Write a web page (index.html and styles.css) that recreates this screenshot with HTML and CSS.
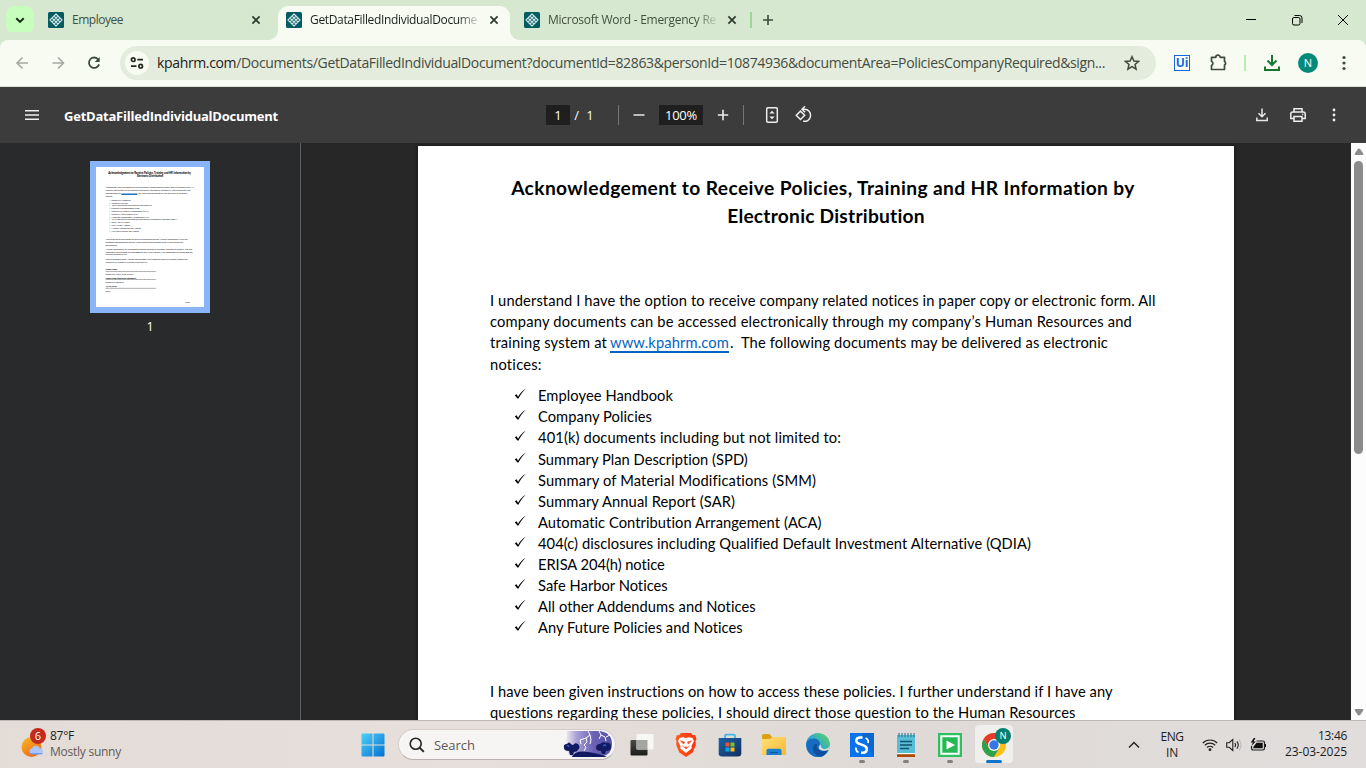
FILE: index.html
```html
<!DOCTYPE html>
<html lang="en">
<head>
<meta charset="utf-8">
<title>GetDataFilledIndividualDocument</title>
<link rel="stylesheet" href="styles.css">
</head>
<body>
<svg width="0" height="0" class="defs">
  <defs>
    <symbol id="kpa" viewBox="0 0 16 16"><rect width="16" height="16" rx="1.5" fill="#045c63"/><path d="M8 2 14 8 8 14 2 8Z M6 4l6 6M4 6l6 6M10 4l-6 6M12 6l-6 6" fill="none" stroke="#cfe6e6" stroke-width="1.1" stroke-linejoin="round"/></symbol>
    <symbol id="x" viewBox="0 0 12 12"><path d="M2.4 2.4l7.2 7.2M9.6 2.4l-7.2 7.2" stroke="currentColor" stroke-width="1.7"/></symbol>
    <symbol id="check" viewBox="0 0 12 12"><path d="M.8 7.200 2.500 6.300 4.100 8.700 C6 5.500 8.400 2.700 11.700 .8 C8.700 3.600 6.500 6.600 4.500 10.500 L3.400 10.500 Z" fill="#000"/></symbol>
    <linearGradient id="gw" x1="0" y1="0" x2="1" y2="1"><stop offset="0" stop-color="#4fd0fb"/><stop offset="1" stop-color="#0270cf"/></linearGradient>
    <linearGradient id="gsun" x1="0" y1="0" x2=".5" y2="1"><stop offset="0" stop-color="#f3bd2c"/><stop offset="1" stop-color="#f56b12"/></linearGradient>
    <linearGradient id="gedge" x1="0" y1="1" x2="1" y2="0"><stop offset="0" stop-color="#1664b5"/><stop offset=".45" stop-color="#2aa5dc"/><stop offset="1" stop-color="#62d851"/></linearGradient>
    <linearGradient id="gstore" x1="0" y1="0" x2="1" y2="1"><stop offset="0" stop-color="#1d62a8"/><stop offset="1" stop-color="#122f5d"/></linearGradient>
    <linearGradient id="gfold" x1="0" y1="0" x2="1" y2="1"><stop offset="0" stop-color="#ffe07a"/><stop offset="1" stop-color="#f5b92c"/></linearGradient>
    <linearGradient id="gbrave" x1="0" y1="0" x2="1" y2="0"><stop offset="0" stop-color="#ff5a22"/><stop offset="1" stop-color="#f7320d"/></linearGradient>
    <linearGradient id="gsky" x1="0" y1="0" x2="1" y2="0"><stop offset="0" stop-color="#f6f3f2"/><stop offset=".25" stop-color="#a9a0d6"/><stop offset=".6" stop-color="#6b62b6"/><stop offset="1" stop-color="#5751a5"/></linearGradient>
    <linearGradient id="gtv" x1="0" y1="0" x2="0" y2="1"><stop offset="0" stop-color="#4a4a48"/><stop offset="1" stop-color="#1d1d1c"/></linearGradient>
  </defs>
</svg>

<header class="tabstrip">
  <div class="tab-search"><svg width="12" height="12" viewBox="0 0 12 12"><path d="M2.300 4.200 6 7.900 9.700 4.200" fill="none" stroke="#1b2b18" stroke-width="2"/></svg></div>
  <div class="tab first"><svg class="fav"><use href="#kpa"/></svg><span class="title"><span data-w="51">Employee</span></span><svg class="close"><use href="#x"/></svg></div>
  <div class="tab active"><svg class="fav"><use href="#kpa"/></svg><span class="title fade"><span data-w="167">GetDataFilledIndividualDocume</span></span><svg class="close"><use href="#x"/></svg></div>
  <div class="tab last"><svg class="fav"><use href="#kpa"/></svg><span class="title fade"><span data-w="168">Microsoft Word - Emergency Re</span></span><svg class="close"><use href="#x"/></svg></div>
  <i class="tab-sep"></i>
  <svg class="newtab" width="12" height="12" viewBox="0 0 12 12"><path d="M6 1v10M1 6h10" stroke="#3c4a3a" stroke-width="1.600"/></svg>
  <div class="winbtns">
    <svg width="46" height="40" viewBox="0 0 46 40"><path d="M18 19.500h10" stroke="#000"/></svg>
    <svg width="46" height="40" viewBox="0 0 46 40"><g fill="none" stroke="#000"><rect x="18.500" y="17.500" width="7.500" height="7.500" rx="1.500"/><path d="M20.500 15.500h5a2.500 2.500 0 0 1 2.500 2.500v5"/></g></svg>
    <svg width="46" height="40" viewBox="0 0 46 40"><path d="M18 15l10 10M28 15 18 25" stroke="#000"/></svg>
  </div>
</header>

<nav class="toolbar">
  <svg class="ic" viewBox="0 0 36 36"><path d="M24 18H13M18.500 12.500 13 18l5.500 5.500" fill="none" stroke="#a5aaa1" stroke-width="1.600"/></svg>
  <svg class="ic" viewBox="0 0 36 36"><path d="M12.500 18h11M18 12.500l5.500 5.500-5.500 5.500" fill="none" stroke="#a5aaa1" stroke-width="1.600"/></svg>
  <svg class="ic" viewBox="0 0 36 36"><path d="M22.300 14.500A5.200 5.200 0 1 0 23.100 19.400" fill="none" stroke="#3d4b3b" stroke-width="1.800"/><path d="M23.700 12v5h-5z" fill="#3d4b3b"/></svg>
  <div class="omnibox">
    <span class="site"><svg width="16" height="16" viewBox="0 0 16 16"><g fill="none" stroke="#24291f" stroke-width="1.700"><circle cx="4.200" cy="4.700" r="1.800"/><path d="M8.300 4.700H14M2 11.200h5.500"/><circle cx="11.700" cy="11.200" r="1.800"/></g></svg></span>
    <span class="url" data-w="948"><b>kpahrm.com</b>/Documents/GetDataFilledIndividualDocument?documentId=82863&amp;personId=10874936&amp;documentArea=PoliciesCompanyRequired&amp;sign...</span>
    <svg class="star" width="16" height="16" viewBox="0 0 16 16"><path d="M8 1.700 9.900 6l4.700.4-3.600 3.100 1.100 4.600L8 11.700l-4.100 2.400L5 9.500 1.400 6.400 6.100 6Z" fill="none" stroke="#3f4a3d" stroke-width="1.500"/></svg>
  </div>
  <span class="ic ui"><span>Ui</span></span>
  <svg class="ic" viewBox="0 0 36 36"><path d="M11.500 12.300h4.300a2.200 2.200 0 0 1 4.400 0h4.300v4.200a2 2 0 0 1 0 3.600v4.400H11.500v-4a2.300 2.300 0 0 0 0-4.200Z" fill="none" stroke="#3c4b3a" stroke-width="1.700" stroke-linejoin="round"/></svg>
  <i class="bar-sep"></i>
  <svg class="ic" viewBox="0 0 36 36"><path d="M18 10v9.500M13.500 15.500 18 20l4.500-4.500M11 21.500V25h14v-3.500" fill="none" stroke="#17752d" stroke-width="2"/></svg>
  <span class="ic"><span class="avatar">N</span></span>
  <svg class="ic" viewBox="0 0 36 36" fill="#3c4b3a"><circle cx="18" cy="12.500" r="1.600"/><circle cx="18" cy="18" r="1.600"/><circle cx="18" cy="23.500" r="1.600"/></svg>
</nav>

<div class="pdfbar">
  <svg class="burger" width="14" height="10" viewBox="0 0 14 10"><path d="M0 .8h14M0 5h14M0 9.200h14" stroke="#efefef" stroke-width="1.500"/></svg>
  <strong class="doc-name"><span data-w="214">GetDataFilledIndividualDocument</span></strong>
  <div class="controls">
    <span class="box page-no">1</span><span class="slash">/</span><span class="total">1</span>
    <i></i>
    <svg class="minus" width="12" height="12" viewBox="0 0 12 12"><path d="M.5 6h11" stroke="#ddd" stroke-width="1.600"/></svg>
    <span class="box zoom"><span data-w="32">100%</span></span>
    <svg class="plus" width="12" height="12" viewBox="0 0 12 12"><path d="M.8 6h10.400M6 .8v10.400" stroke="#eee" stroke-width="1.600"/></svg>
    <i></i>
    <svg class="fit" width="14" height="18" viewBox="0 0 14 18"><rect x="1.700" y="1.700" width="10.600" height="14.600" rx="1.200" fill="none" stroke="#eee" stroke-width="1.500"/><path d="M4.300 7.500 7 4.800l2.700 2.700zM4.300 10.500 7 13.200l2.700-2.700z" fill="#eee"/></svg>
    <svg class="rotate" width="20" height="20" viewBox="0 0 20 20"><g fill="none" stroke="#eee" stroke-width="1.500"><path d="M2.300 10.300 6.500 6.100l4.200 4.200-4.200 4.200Z"/><path d="M8.200 4.300h2.300a6 6 0 1 1-1.400 11.800"/><path d="M11 1.300 8 4.300l3 3"/></g></svg>
  </div>
  <div class="actions">
    <svg class="ic" viewBox="0 0 36 36"><path d="M18 11.500v8M14.500 16.300l3.500 3.500 3.500-3.500M12.800 20.500v3h10.400v-3" fill="none" stroke="#e8e8e8" stroke-width="1.500"/></svg>
    <svg class="ic" viewBox="0 0 36 36"><g fill="none" stroke="#eee" stroke-width="1.500"><path d="M14 15v-3.200h8V15M14 21.500h-3.200V17a2 2 0 0 1 2-2h10.400a2 2 0 0 1 2 2v4.500H22"/><path d="M14 19.500h8v4.700h-8z"/></g><circle cx="22.700" cy="17.300" r=".8" fill="#eee"/></svg>
    <svg class="ic" viewBox="0 0 36 36" fill="#eee"><circle cx="18" cy="13" r="1.400"/><circle cx="18" cy="18" r="1.400"/><circle cx="18" cy="23" r="1.400"/></svg>
  </div>
</div>

<main class="viewer">
  <aside class="thumbs">
    <div class="thumb">
      <svg width="108" height="140" viewBox="0 0 816 1056" class="mini">
        <g class="mini-h"><text x="93" y="49" textLength="624" lengthAdjust="spacingAndGlyphs">Acknowledgement to Receive Policies, Training and HR Information by</text><text x="309" y="77" textLength="198" lengthAdjust="spacingAndGlyphs">Electronic Distribution</text></g>
        <text x="72" y="160" textLength="666">I understand I have the option to receive company related notices in paper copy or electronic form. All</text>
        <text x="72" y="181" textLength="642">company documents can be accessed electronically through my company’s Human Resources and</text>
        <text x="72" y="202" textLength="114">training system at</text><text x="192" y="202" fill="#0563c1" textLength="119">www.kpahrm.com</text><path d="M191 206h121" stroke="#0563c1" stroke-width="8"/><text x="312" y="202" textLength="377">. The following documents may be delivered as electronic</text>
        <text x="72" y="224">notices:</text>
        <text x="98" y="255">✓ Employee Handbook</text><text x="98" y="276">✓ Company Policies</text><text x="98" y="297" textLength="324">✓ 401(k) documents including but not limited to:</text><text x="98" y="319" textLength="232">✓ Summary Plan Description (SPD)</text><text x="98" y="340" textLength="300">✓ Summary of Material Modifications (SMM)</text><text x="98" y="361" textLength="219">✓ Summary Annual Report (SAR)</text><text x="98" y="382" textLength="306">✓ Automatic Contribution Arrangement (ACA)</text><text x="98" y="403" textLength="514">✓ 404(c) disclosures including Qualified Default Investment Alternative (QDIA)</text><text x="98" y="424">✓ ERISA 204(h) notice</text><text x="98" y="445">✓ Safe Harbor Notices</text><text x="98" y="466" textLength="240">✓ All other Addendums and Notices</text><text x="98" y="487" textLength="226">✓ Any Future Policies and Notices</text>
        <text x="72" y="551" textLength="622">I have been given instructions on how to access these policies. I further understand if I have any</text>
        <text x="72" y="572" textLength="586">questions regarding these policies, I should direct those question to the Human Resources</text>
        <text x="72" y="596">Department.</text>
        <text x="72" y="625" textLength="655">I accept responsibility for accessing the policies through an accessible computer at anytime, and also</text>
        <text x="72" y="647" textLength="658">understand that printing or transmitting is at my own expense. I am responsible for completing the</text>
        <text x="72" y="667">training assigned to me.</text>
        <text x="72" y="703" textLength="618">With my signature below, I hereby acknowledge I have chosen to receive all company notices and</text>
        <text x="72" y="721" textLength="320">complete all company training electronically.</text>
        <g class="mini-b"><text x="72" y="778">Name Name</text><text x="72" y="846" textLength="230">Name Name (Electronic Signature)</text><text x="76" y="904">3/23/2025</text></g>
        <path d="M72 789h382M72 849h382M72 916h382" stroke="#222" stroke-width="3" stroke-dasharray="9 1"/>
        <text x="72" y="816">Employee Name (Print Clearly)</text><text x="72" y="877">Employee Signature</text><text x="72" y="944">Date</text><text x="674" y="1028">2021</text>
      </svg>
    </div>
    <span class="thumb-no">1</span>
  </aside>
  <section class="canvas">
    <article class="page">
      <h1><span class="ln" data-w="624">Acknowledgement to Receive Policies, Training and HR Information by</span><span class="ln second" data-w="198">Electronic Distribution</span></h1>
      <p class="intro">
        <span class="ln" data-w="666">I understand I have the option to receive company related notices in paper copy or electronic form. All</span>
        <span class="ln" data-w="642">company documents can be accessed electronically through my company’s Human Resources and</span>
        <span class="row"><span data-w="117">training system at</span><a data-w="119">www.kpahrm.com</a><span data-w="378">.&nbsp; The following documents may be delivered as electronic</span></span>
        <span class="ln" data-w="52">notices:</span>
      </p>
      <ul>
        <li><svg><use href="#check"/></svg><span data-w="135">Employee Handbook</span></li>
        <li><svg><use href="#check"/></svg><span data-w="114">Company Policies</span></li>
        <li><svg><use href="#check"/></svg><span data-w="303">401(k) documents including but not limited to:</span></li>
        <li><svg><use href="#check"/></svg><span data-w="210">Summary Plan Description (SPD)</span></li>
        <li><svg><use href="#check"/></svg><span data-w="278">Summary of Material Modifications (SMM)</span></li>
        <li><svg><use href="#check"/></svg><span data-w="197">Summary Annual Report (SAR)</span></li>
        <li><svg><use href="#check"/></svg><span data-w="284">Automatic Contribution Arrangement (ACA)</span></li>
        <li><svg><use href="#check"/></svg><span data-w="493">404(c) disclosures including Qualified Default Investment Alternative (QDIA)</span></li>
        <li><svg><use href="#check"/></svg><span data-w="127">ERISA 204(h) notice</span></li>
        <li><svg><use href="#check"/></svg><span data-w="130">Safe Harbor Notices</span></li>
        <li><svg><use href="#check"/></svg><span data-w="218">All other Addendums and Notices</span></li>
        <li><svg><use href="#check"/></svg><span data-w="205">Any Future Policies and Notices</span></li>
      </ul>
      <p class="more">
        <span class="ln" data-w="623">I have been given instructions on how to access these policies. I further understand if I have any</span>
        <span class="ln" data-w="586">questions regarding these policies, I should direct those question to the Human Resources</span>
      </p>
    </article>
  </section>
  <div class="scroll"><svg width="10" height="7" viewBox="0 0 10 7"><path d="M4 .8h2L9.500 6 9 7H1L.5 6Z" fill="#8b8b8b"/></svg><span class="grip"></span><svg class="down" width="10" height="7" viewBox="0 0 10 7"><path d="M4 6.200h2L9.500 1 9 0H1L.5 1Z" fill="#8b8b8b"/></svg></div>
</main>

<footer class="taskbar">
  <div class="weather">
    <div class="sun"><svg width="24" height="24" viewBox="0 0 24 24"><circle cx="10.500" cy="11" r="10" fill="url(#gsun)"/><path d="M10.500 18a3 3 0 0 1 .4-5.800 4.500 4.500 0 0 1 8 0A3 3 0 0 1 20 18Z" fill="#a9c6fb"/><path d="M8.500 17h13.500q-1 1.500-2.500 1.500h-9Q9 18.500 8.500 17Z" fill="#6f9ff0"/></svg><span class="badge">6</span></div>
    <div class="wtext"><span data-w="24">87°F</span><span class="dim" data-w="71">Mostly sunny</span></div>
  </div>
  <svg class="start" width="24" height="24" viewBox="0 0 24 24" fill="url(#gw)"><path d="M.5 1.500q0-1 1-1h10v11H.5zM12.500.500h10q1 0 1 1v10h-11zM.5 12.500h11v11h-10q-1 0-1-1zM12.500 12.500h11v10q0 1-1 1h-10z"/></svg>
  <div class="search">
    <svg width="16" height="16" viewBox="0 0 16 16"><circle cx="6.700" cy="6.700" r="5.500" fill="none" stroke="#222" stroke-width="1.600"/><path d="m10.800 10.800 4 4" stroke="#222" stroke-width="1.900"/></svg>
    <span data-w="41">Search</span>
    <svg class="storm" width="50" height="27" viewBox="0 0 50 27"><path d="M4 0h33q12 2 12 13T38 26H9Q1 20 2 13Q4 8 4 0Z" fill="url(#gsky)"/><g fill="#101b61"><path d="M9 26Q12 19 25 21T44 26z"/><path d="M1 17q-1-4 3-4 2-3 4 0 1 1 2 1 2-3 5-1 3 3 0 6-1 2-4 2l-1 3H7l-1-4q-5 0-5-3zM33 17q0-4 4-4 3-3 6-1 5-1 5 4 0 4-5 4l-1 3h-3l-1-3q-5 0-5-3z"/></g><g fill="none" stroke="#fff" stroke-width="1"><path d="m25 0 2 4-4 3 1 4-3 3 2 2-2 4M27 4l1 5-1 4M23 7l-6 2 1 4M36 0l2 4-2 4M38 4l4 2 1 4M43 6l4-2"/></g><path d="M4 15q1-1 2 1M40 15q2-2 3 0" stroke="#3458bd" stroke-width="1.500" fill="none"/></svg>
  </div>
  <div class="apps">
    <span><svg width="24" height="24" viewBox="0 0 24 24"><rect x=".5" y="7" width="17" height="15.500" rx="1" fill="url(#gtv)"/><rect x="6.500" y="1" width="17" height="15.500" rx="1" fill="#f7f7f5"/><path d="M6.500 7h11v9.500h-11z" fill="#a5a5a2"/></svg></span>
    <span><svg width="24" height="24" viewBox="0 0 24 24"><path d="M7 0h10l2 2.300 2-.2L22.500 6l-1 2 .3 4-3.100 7.500L12 24l-6.700-4.500L2.200 12 2.500 8 1.500 6 3 2.100l2 .2Z" fill="url(#gbrave)"/><path d="m5.500 5 3.500-.8L12 5l3-.8 3.500.8 1.500 3-2.500 5 .2 2.500L14.500 18 12 20l-2.500-2-3.200-2.500.2-2.500L4 8Z" fill="#fff"/><path d="m6.500 8 4 1-.8 2zM17.500 8l-4 1 .8 2zM10.500 14h3L12 16zM8.500 12.500l1.500 2M15.500 12.500l-1.500 2" fill="#f8491c" stroke="#f8491c" stroke-width=".7"/></svg></span>
    <span><svg width="24" height="24" viewBox="0 0 24 24"><path d="M7 6V3q0-1.300 1.300-1.300h7.400Q17 1.700 17 3v3" fill="none" stroke="#43b6e8" stroke-width="1.800"/><path d="M.7 5h22.600v15.500Q23.300 23.500 20 23.500H4Q.7 23.500.7 20.500Z" fill="url(#gstore)"/><path fill="#f35325" d="M7.500 9.500h4v4h-4z"/><path fill="#81bc32" d="M12.500 9.500h4v4h-4z"/><path fill="#05a6f0" d="M7.500 14.500h4v4h-4z"/><path fill="#ffba08" d="M12.500 14.500h4v4h-4z"/></svg></span>
    <span><svg width="24" height="24" viewBox="0 0 24 24"><path d="M0 2.500Q0 1 1.500 1h6L10 4H24v5H0Z" fill="#dba20d"/><path d="M0 6h8l2.500-2H24v18H0Z" fill="url(#gfold)"/><path d="M4.500 22v-4.500q0-1.800 1.800-1.800h11.400q1.800 0 1.800 1.800V22Z" fill="#1d7fd0"/><path d="M8 19h8v1.200H8z" fill="#0c5aa3"/></svg></span>
    <span><svg width="24" height="24" viewBox="0 0 24 24"><circle cx="12" cy="12" r="12" fill="url(#gedge)"/><path d="M1 8.500C5 3.500 13 5 14 10c.500 2-2.500 3-1 5.500 2 3 7 2.500 9.500 0Q20 24 12 24C4 24-1 16 1 8.500Z" fill="#156cc0"/><path d="M9 11c-4 3-2 11 5 12.800Q20 23 22.500 16q-5 4-10 .5-3-2.500-1-5.500z" fill="#0d4f9e"/><path d="M14.500 11.500q.5 5 5 4.500 3.500-.6 4.400-4l-.8 4.800q-5 2-9.200-.1-2.500-2 .6-5.200Z" fill="#e2ddda"/></svg></span>
    <span class="run"><svg width="24" height="24" viewBox="0 0 24 24"><path fill="#0873ea" d="M0 0h24v24H0z"/><path d="M12 0h12v24z" fill="#0966cc"/><path d="M12.500 4.500H10C5.500 4.500 5.200 9.500 9 10.700l5 2c4 1.500 3.500 7-1 7h-2" fill="none" stroke="#fff" stroke-width="2.500"/><path d="M15.500 5q3.500 1.500 2.500 5M8.500 19.500Q5.500 18 6 14.500" stroke="#fff" stroke-width="1.800" fill="none"/></svg></span>
    <span class="run"><svg width="24" height="24" viewBox="0 0 24 24"><path d="M3 2h18v20H3z" fill="#58bed6"/><path d="M3 21h18v3H3z" fill="#a94b0a"/><path d="M3 20h18v1.200H3z" fill="#fff"/><path d="M5 0v4M8 0v4M11 0v4M14 0v4M17 0v4M20 0v4" stroke="#246a82"/><path d="M6 8.500h12M6 12h12M6 15.500h9" stroke="#12526c" stroke-width="1.600"/></svg></span>
    <span class="run"><svg width="24" height="24" viewBox="0 0 24 24"><path d="M0 0h24v24H0z" fill="#2ec161"/><path d="M3.300 3.300h17.400v17.400H3.300z" fill="#24b954" stroke="#fff" stroke-width="2"/><path d="m8.500 7.500 8.500 4.500-8.500 4.500z" fill="#fff"/></svg></span>
    <span class="current"><svg width="24" height="24" viewBox="0 0 24 24"><circle cx="12" cy="12" r="12" fill="#fbc116"/><path d="M1.600 6A12 12 0 0 1 22.400 6H12L6.800 15Z" fill="#e33b2e"/><path d="M1.600 6A12 12 0 0 0 12 24l5.200-9H6.800Z" fill="#2ba24c"/><circle cx="12" cy="12" r="6" fill="#fff"/><circle cx="12" cy="12" r="4.700" fill="#3478e5"/></svg><b>N</b></span>
  </div>
  <div class="tray">
    <svg class="up" width="12" height="8" viewBox="0 0 12 8"><path d="m1 6.500 5-5 5 5" fill="none" stroke="#222" stroke-width="1.400"/></svg>
    <div class="lang"><span data-w="23">ENG</span><span data-w="12">IN</span></div>
    <svg class="wifi" width="16" height="14" viewBox="0 0 16 14"><g fill="none" stroke="#222" stroke-width="1.200"><path d="M.8 5a10.200 10.200 0 0 1 14.400 0M2.800 7.300a7.400 7.400 0 0 1 10.400 0M5 9.500a4.300 4.300 0 0 1 6 0"/></g><circle cx="8" cy="11.700" r="1.400" fill="#222"/></svg>
    <svg class="spk" width="16" height="14" viewBox="0 0 16 14"><g fill="none" stroke="#222" stroke-width="1.100"><path d="M.7 4.700h2.500L6.800 1.500v11L3.200 9.300H.7ZM8.800 5q1.600 2 0 4M10.800 3.300q3 3.700 0 7.400"/><path d="M13 1.600q4 5.400 0 10.800" stroke="#bbb"/></g></svg>
    <svg class="bat" width="17" height="14" viewBox="0 0 17 14"><path d="M6.500 3h6.300q1.700 0 1.700 1.700v5.600q0 1.700-1.700 1.700H3.200q-1.700 0-1.700-1.700V8" fill="none" stroke="#222" stroke-width="1.200"/><path d="M6.500 4.800h6.200v5.400H3.300V9zM15 6h1v3h-1zM3.800 0 .7 4.500h2.200L1.500 8 5.800 3.500H3.500L5.500 0z" fill="#111"/></svg>
    <div class="clock"><span data-w="29">13:46</span><span data-w="62">23-03-2025</span></div>
  </div>
</footer>
<script src="fit.js"></script>
</body>
</html>
```

FILE: styles.css
```css
* { box-sizing: border-box; }
body { margin: 0; width: 1366px; height: 768px; overflow: hidden; display: flex; flex-direction: column; font-family: "Open Sans", "Noto Sans", sans-serif; font-size: 12px; }
svg { display: block; flex: none; }
.defs { position: absolute; }
[data-w] { display: inline-block; white-space: pre; }
i { display: block; flex: none; }

.tabstrip { height: 40px; flex: none; background: #d6e8cf; display: flex; align-items: center; padding-left: 6px; color: #42503f; }
.tab-search { width: 28px; height: 28px; border-radius: 9px; background: #c7fdbd; display: grid; place-items: center; }
.tab { display: flex; align-items: center; height: 34px; padding: 0 8px; }
.tab.first { width: 236px; margin-left: 6px; }
.tab.active { width: 232px; height: 34px; align-self: flex-end; background: #f8fbf2; border-radius: 10px 10px 0 0; color: #1b221a; padding-bottom: 6px; margin: 0 2px; position: relative; }
.tab.active::before, .tab.active::after { content: ""; position: absolute; bottom: 0; width: 10px; height: 10px; }
.tab.active::before { left: -10px; background: radial-gradient(circle at 0 0, #d6e8cf 9.500px, #f8fbf2 10.500px); }
.tab.active::after { right: -10px; background: radial-gradient(circle at 100% 0, #d6e8cf 9.500px, #f8fbf2 10.500px); }
.tab.last { width: 236px; margin-left: 4px; }
.fav { width: 16px; height: 16px; }
.close { width: 12px; height: 12px; margin-left: 10px; color: #2c382a; }
.title { width: 168px; margin-left: 8px; overflow: hidden; white-space: nowrap; line-height: 18px; flex: none; }
.first .title { margin-right: 0; }
.first .close { margin-left: 10px; }
.fade { -webkit-mask-image: linear-gradient(90deg, #000 88%, transparent 102%); mask-image: linear-gradient(90deg, #000 88%, transparent 102%); }
.tab-sep { width: 2px; height: 16px; background: #9bd794; margin-left: -2px; }
.newtab { margin-left: 10px; }
.winbtns { display: flex; margin-left: auto; }

.toolbar { height: 47px; flex: none; background: #f8fbf2; border-bottom: 1px solid #dbe4d4; border-radius: 8px 8px 0 0; display: flex; align-items: center; padding-left: 4px; box-shadow: 0 -8px 0 -0px #d6e8cf; }
.ic { width: 36px; height: 36px; flex: none; display: grid; place-items: center; }
.omnibox { width: 1036px; height: 34px; margin: 0 8px; border-radius: 17px; background: #e4ecdd; display: flex; align-items: center; padding-left: 5px; font-size: 14px; color: #454d42; }
.omnibox b { font-weight: 400; color: #1b201a; }
.site { width: 24px; height: 24px; border-radius: 50%; background: #f8fbf2; display: grid; place-items: center; margin-right: 8px; }
.url { width: 949px; line-height: 22px; }
.star { margin-left: 18px; }
.ui span { width: 16px; height: 16px; border: 1.500px solid #1467dd; color: #1467dd; font: bold 12px/13px "Open Sans", sans-serif; text-align: center; background: #fff; }
.bar-sep { width: 2px; height: 16px; background: #b8eeae; margin: 0 8px; }
.avatar { width: 20px; height: 20px; border-radius: 50%; background: #04897b; color: #fff; text-align: center; line-height: 20px; font-size: 11px; }

.pdfbar { height: 56px; flex: none; background: #3c3c3c; color: #fff; display: flex; align-items: center; padding-left: 25px; font-size: 13px; }
.doc-name { width: 457px; margin: 2px 0 0 25px; font-size: 13px; }
.controls { display: flex; align-items: center; margin-left: 25px; width: 269px; }
.box { background: #1f1f1f; height: 20px; line-height: 21px; text-align: center; flex: none; }
.page-no { width: 24px; }
.slash { width: 9px; text-align: right; }
.total { width: 8px; margin-left: 7px; text-align: center; }
.controls i { width: 1px; height: 20px; background: #757575; margin-left: 24px; }
.minus { margin-left: 14px; }
.zoom { width: 44px; margin-left: 14px; }
.plus { margin-left: 14px; }
.controls .plus + i { margin-left: 14px; }
.fit { margin-left: 21px; }
.rotate { margin-left: 15px; }
.actions { display: flex; margin-left: auto; padding-right: 14px; }

.viewer { height: 577px; flex: none; display: flex; background: #272727; overflow: hidden; box-shadow: inset 0 1px #262626; }
.thumbs { width: 301px; background: #282a2b; border-right: 1px solid #606060; display: flex; flex-direction: column; align-items: center; padding-top: 18px; }
.thumb { width: 120px; height: 152px; border: 6px solid #8ab4f8; background: #fff; }
.thumb-no { color: #fff; font-size: 12.500px; margin-top: 5px; line-height: 18px; }
.mini { font: 16px "Lato", sans-serif; fill: #111; }
.mini-h { font-size: 22px; font-weight: 900; fill: #000; }
.mini-b { font-weight: 900; fill: #000; }
.canvas { width: 1050px; padding: 3px 0 0 117px; overflow: hidden; }
.page { width: 816px; height: 1056px; background: #fff; color: #000; padding: 28px 72px; font-family: "Lato", sans-serif; font-size: 14.700px; line-height: 21.100px; box-shadow: 0 0 3px #111; }
.ln { display: block !important; width: max-content; }
.page h1 { margin: 0 0 0; font-size: 19.200px; line-height: 28px; padding-right: 6px; }
.page h1 .ln { margin: 0 auto; }
.page h1 .second { padding-left: 6px; }
.page p { margin: 0; }
.page .intro { padding-top: 60px; line-height: 21.200px; }
.row { display: flex; }
.row a { color: #0563c1; margin: 0 1px 0 3px; box-shadow: inset 0 -1px #fff, inset 0 -3px #0563c1; }
.page ul { list-style: none; margin: 10px 0 0; padding: 0 0 0 24px; }
.page li { display: flex; height: 21px; }
.page li:nth-child(3) { height: 22px; }
.page li svg { width: 12px; height: 12px; margin: 3px 12px 0 0; }
.page .more { padding-top: 43px; }
.scroll { width: 15px; background: #fcfcfc; display: flex; flex-direction: column; align-items: center; padding: 5px 0 4px; }
.grip { width: 9px; height: 293px; border-radius: 5px; background: #8b8b8b; margin-top: 6px; }
.down { margin-top: auto; }

.taskbar { height: 48px; flex: none; border-top: 1px solid #bdb8b3; background: linear-gradient(90deg, #e4dcd7, #e6dfdb 35%, #dfdad7 65%, #e0dddc); display: flex; align-items: center; color: #1c1c1c; position: relative; }
.weather { display: flex; width: 341px; padding-left: 20px; }
.sun { width: 24px; height: 24px; margin-top: 7px; position: relative; }
.sun svg { margin-left: .5px; }
.badge { position: absolute; left: 10px; top: -8px; width: 16px; height: 16px; border-radius: 50%; background: #c42b1c; color: #fff; font-size: 11px; line-height: 16px; text-align: center; }
.wtext { display: flex; flex-direction: column; align-items: flex-start; line-height: 16px; margin: -1px 0 0 6px; font-size: 12px; }
.dim { color: #5f5b59; }
.start { margin-left: 20px; }
.search { width: 218px; height: 31px; margin-left: 13px; border-radius: 16px; background: #f7f5f4; border: 1px solid #d6d0cc; border-bottom-color: #b9b2ae; display: flex; align-items: center; padding-left: 10px; font-size: 13px; color: #5b5856; }
.search > span { margin-left: 9px; }
.storm { margin-left: auto; margin-right: 2px; }
.apps { display: flex; margin-left: 4px; }
.apps > span { width: 44px; height: 48px; display: grid; place-items: center; position: relative; }
.run::after, .current::after { content: ""; position: absolute; bottom: 6px; left: 19px; width: 6px; height: 3px; border-radius: 2px; background: #85807e; }
.current::before { content: ""; position: absolute; left: 3px; top: 4px; width: 38px; height: 38px; border-radius: 4px; background: #f1efee; }
.current svg { position: relative; }
.current::after { left: 14px; width: 16px; background: #0b74cf; }
.current b { position: absolute; left: 23px; top: 7px; width: 16px; height: 16px; border-radius: 50%; background: #04806f; color: #fff; font-weight: 400; font-size: 9.500px; line-height: 16px; text-align: center; }
.tray { display: flex; align-items: center; margin-left: auto; padding-right: 19px; font-size: 12px; line-height: 16px; }
.lang { display: flex; flex-direction: column; align-items: center; width: 24px; margin: 0 0 0 20px; }
.wifi { margin-left: 18px; }
.spk { margin-left: 8px; }
.bat { margin-left: 8px; }
.clock { display: flex; flex-direction: column; align-items: flex-end; width: 80px; margin-top: -2px; }
```

FILE: fit.js
```js
// Spread the letters of each text run so that it fills its layout width.
document.querySelectorAll('[data-w]').forEach(function (el) {
  var range = document.createRange();
  range.selectNodeContents(el);
  var natural = range.getBoundingClientRect().width;
  var count = el.textContent.length;
  el.style.letterSpacing = ((Number(el.dataset.w) - natural) / count) + 'px';
});
```
